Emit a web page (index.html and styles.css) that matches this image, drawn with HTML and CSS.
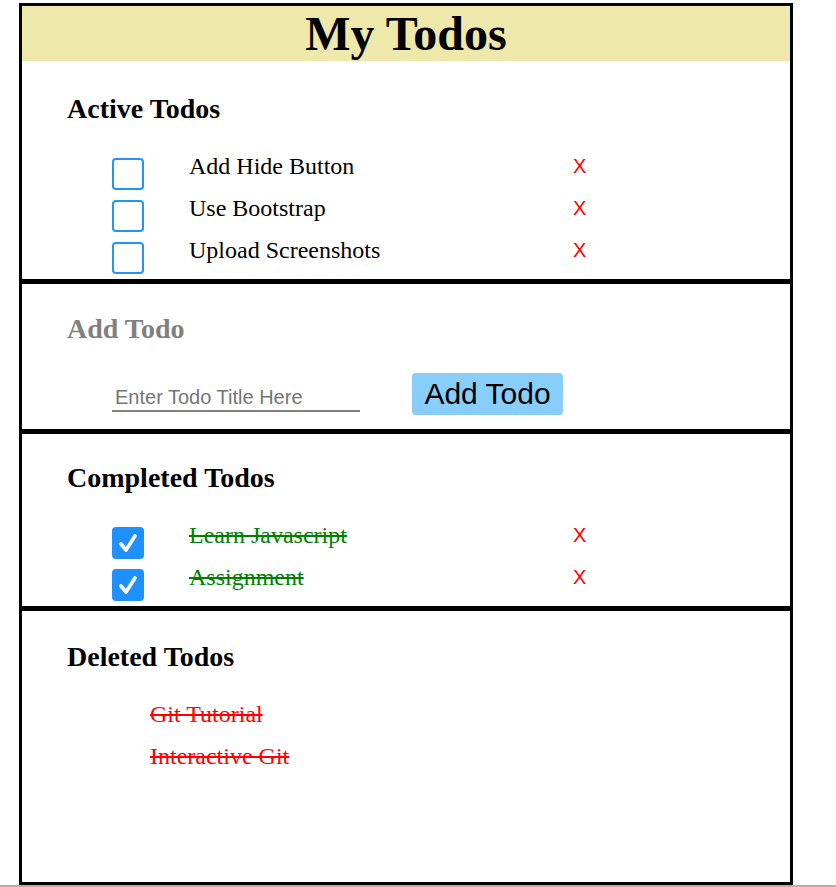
FILE: index.html
```html
<!DOCTYPE html>
<html lang="en">
<head>
<meta charset="utf-8">
<title>My Todos</title>
<link rel="stylesheet" href="styles.css">
</head>
<body>
<div class="app">
  <header class="app-header"><h1 class="app-title">My Todos</h1></header>

  <section class="panel panel-active">
    <h2 class="panel-title">Active Todos</h2>
    <ul class="todo-list">
      <li class="todo-row"><span class="check"></span><span class="todo-text">Add Hide Button</span><span class="todo-del">X</span></li>
      <li class="todo-row"><span class="check"></span><span class="todo-text">Use Bootstrap</span><span class="todo-del">X</span></li>
      <li class="todo-row"><span class="check"></span><span class="todo-text">Upload Screenshots</span><span class="todo-del">X</span></li>
    </ul>
  </section>

  <section class="panel panel-add">
    <h2 class="panel-title muted">Add Todo</h2>
    <form class="add-form">
      <input class="add-input" type="text" placeholder="Enter Todo Title Here">
      <button class="add-btn" type="button">Add Todo</button>
    </form>
  </section>

  <section class="panel panel-done">
    <h2 class="panel-title">Completed Todos</h2>
    <ul class="todo-list">
      <li class="todo-row"><span class="check checked"><svg viewBox="0 0 32 32" width="32" height="32"><polyline points="9,17 14,23 23,9" fill="none" stroke="#fff" stroke-width="3.6" stroke-linecap="round" stroke-linejoin="round"/></svg></span><span class="todo-text done">Learn Javascript</span><span class="todo-del">X</span></li>
      <li class="todo-row"><span class="check checked"><svg viewBox="0 0 32 32" width="32" height="32"><polyline points="9,17 14,23 23,9" fill="none" stroke="#fff" stroke-width="3.6" stroke-linecap="round" stroke-linejoin="round"/></svg></span><span class="todo-text done">Assignment</span><span class="todo-del">X</span></li>
    </ul>
  </section>

  <section class="panel panel-deleted">
    <h2 class="panel-title">Deleted Todos</h2>
    <ul class="deleted-list">
      <li class="deleted-item">Git Tutorial</li>
      <li class="deleted-item">Interactive Git</li>
    </ul>
  </section>
</div>
<div class="bottom-strip"></div>
</body>
</html>
```

FILE: styles.css
```css
html, body {
  margin: 0;
  padding: 0;
  background: #fff;
}
body {
  padding-top: 3px;
  font-family: "Liberation Serif", "Times New Roman", serif;
  color: #000;
}
.app {
  box-sizing: border-box;
  margin-left: 19px;
  width: 774px;
  height: 882px;
  border: 3px solid #000;
  display: flex;
  flex-direction: column;
}
.app-header {
  height: 55px;
  background: #eee8aa;
}
.app-title {
  margin: 0;
  font-size: 48px;
  line-height: 55px;
  font-weight: bold;
  text-align: center;
}
.panel {
  padding: 0 0 0 45px;
}
.panel-active {
  height: 223px;
  padding-top: 32px;
  box-sizing: border-box;
  border-bottom: 5px solid #000;
}
.panel-add {
  height: 150px;
  padding-top: 29px;
  box-sizing: border-box;
  border-bottom: 5px solid #000;
}
.panel-done {
  height: 177px;
  padding-top: 28px;
  box-sizing: border-box;
  border-bottom: 5px solid #000;
}
.panel-deleted {
  flex: 1;
  padding-top: 30px;
}
.panel-title {
  margin: 0;
  font-size: 28px;
  line-height: 32px;
  font-weight: bold;
}
.muted {
  color: #808080;
}
.todo-list, .deleted-list {
  list-style: none;
  margin: 28px 0 0;
  padding: 0;
}
.todo-row {
  display: grid;
  grid-template-columns: 34px 383px auto;
  column-gap: 43px;
  height: 42px;
  padding-left: 45px;
  align-items: start;
}
.todo-row .check {
  margin-top: 5px;
}
.check {
  box-sizing: border-box;
  width: 32px;
  height: 32px;
  border: 2px solid #2196f3;
  border-radius: 4px;
  display: block;
}
.check.checked {
  background: #1e90ff;
  border-color: #1e90ff;
}
.check.checked svg {
  display: block;
  margin: -2px;
}
.todo-text {
  font-size: 24px;
  line-height: 26px;
}
.todo-text.done {
  color: #008000;
  text-decoration: line-through;
}
.todo-del {
  font-family: "Liberation Sans", Arial, sans-serif;
  font-size: 20px;
  line-height: 26px;
  color: #ff0000;
  margin-left: -42px;
}
.add-form {
  display: flex;
  align-items: flex-end;
  margin: 28px 0 0 45px;
  gap: 52px;
}
.add-input {
  box-sizing: border-box;
  width: 248px;
  height: 32px;
  border: none;
  border-bottom: 2px solid #808080;
  padding: 4px 3px 0;
  font-family: "Liberation Sans", Arial, sans-serif;
  font-size: 20px;
  outline: none;
  background: transparent;
  margin-bottom: 3px;
}
.add-input::placeholder {
  color: #757575;
}
.add-btn {
  box-sizing: border-box;
  width: 151px;
  height: 42px;
  border: none;
  border-radius: 4px;
  background: #87cefa;
  font-family: "Liberation Sans", Arial, sans-serif;
  font-size: 30px;
  color: #000;
  padding: 0;
}
.deleted-item {
  padding-left: 83px;
  height: 42px;
  font-size: 24px;
  line-height: 26px;
  color: #ff0000;
  text-decoration: line-through;
}
.bottom-strip {
  height: 2px;
  background: #b5b19b;
}
```
